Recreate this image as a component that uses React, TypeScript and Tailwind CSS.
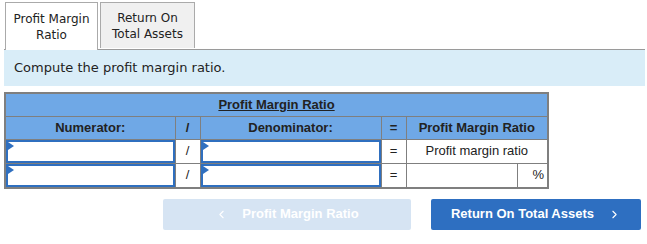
import { ChevronLeft, ChevronRight } from "lucide-react";

function InputCell() {
  return (
    <td className="p-0 border border-[#7f7f7f] h-[23px]">
      <div className="relative h-[23px] border-2 border-[#2f6fbf] bg-white">
        <span className="absolute left-0 top-0 w-0 h-0 border-t-[4px] border-b-[4px] border-l-[6px] border-t-transparent border-b-transparent border-l-[#2f6fbf]" />
      </div>
    </td>
  );
}

export default function App() {
  const sans = "font-['DejaVu_Sans','Verdana',sans-serif]";
  const arial = "font-['Liberation_Sans','Arial',sans-serif]";
  const cell = "border border-[#7f7f7f] text-center p-0";

  return (
    <div className="w-[647px] h-[244px] bg-white pl-[4px] pr-[2px] pt-[2px]">
      {/* Tabs */}
      <div className={`flex items-end gap-[2px] border-b border-[#9a9a9a] h-[48px] text-[12px] text-[#222] leading-[16px] ${sans}`}>
        <div className="ml-[1px] w-[93px] h-[48px] -mb-px bg-white border border-b-0 border-[#aaaaaa] flex items-center justify-center text-center">
          Profit Margin
          <br />
          Ratio
        </div>
        <div className="w-[95px] h-[46px] bg-[#f0f0f0] border border-b-0 border-[#aaaaaa] flex items-center justify-center text-center self-start">
          Return On
          <br />
          Total Assets
        </div>
      </div>

      {/* Prompt */}
      <div className={`h-[36px] bg-[#d9edf8] flex items-center pl-[10px] text-[13px] text-[#222] ${sans}`}>
        Compute the profit margin ratio.
      </div>

      {/* Table */}
      <table className={`mt-[6px] w-[543px] border-collapse border-2 border-[#7f7f7f] table-fixed text-[13px] leading-[16px] text-[#222] ${arial}`}>
        <colgroup>
          <col className="w-[170px]" />
          <col className="w-[25px]" />
          <col className="w-[181px]" />
          <col className="w-[25px]" />
          <col className="w-[111px]" />
          <col className="w-[31px]" />
        </colgroup>
        <tbody>
          <tr className="h-[23px] bg-[#6fa8e6]">
            <td colSpan={6} className={`${cell} font-bold underline`}>
              Profit Margin Ratio
            </td>
          </tr>
          <tr className="h-[23px] bg-[#6fa8e6] font-bold">
            <td className={cell}>Numerator:</td>
            <td className={cell}>/</td>
            <td className={cell}>Denominator:</td>
            <td className={cell}>=</td>
            <td colSpan={2} className={cell}>
              Profit Margin Ratio
            </td>
          </tr>
          <tr className="h-[24px] bg-white">
            <InputCell />
            <td className={cell}>/</td>
            <InputCell />
            <td className={cell}>=</td>
            <td colSpan={2} className={cell}>
              Profit margin ratio
            </td>
          </tr>
          <tr className="h-[24px] bg-white">
            <InputCell />
            <td className={cell}>/</td>
            <InputCell />
            <td className={cell}>=</td>
            <td className={cell}></td>
            <td className={`${cell} text-right pr-[3px]`}>%</td>
          </tr>
        </tbody>
      </table>

      {/* Nav buttons */}
      <div className={`mt-[10px] flex justify-end gap-[20px] pr-[4px] text-[13px] font-bold text-white ${arial}`}>
        <button
          type="button"
          className="w-[248px] h-[31px] rounded-[2px] bg-[#d6e4f3] flex items-center justify-center gap-[14px]"
        >
          <ChevronLeft className="w-[13px] h-[13px]" strokeWidth={2} />
          <span>Profit Margin Ratio</span>
        </button>
        <button
          type="button"
          className="w-[210px] h-[31px] rounded-[2px] bg-[#2e6fc1] flex items-center justify-center gap-[14px]"
        >
          <span>Return On Total Assets</span>
          <ChevronRight className="w-[13px] h-[13px]" strokeWidth={2} />
        </button>
      </div>
    </div>
  );
}
